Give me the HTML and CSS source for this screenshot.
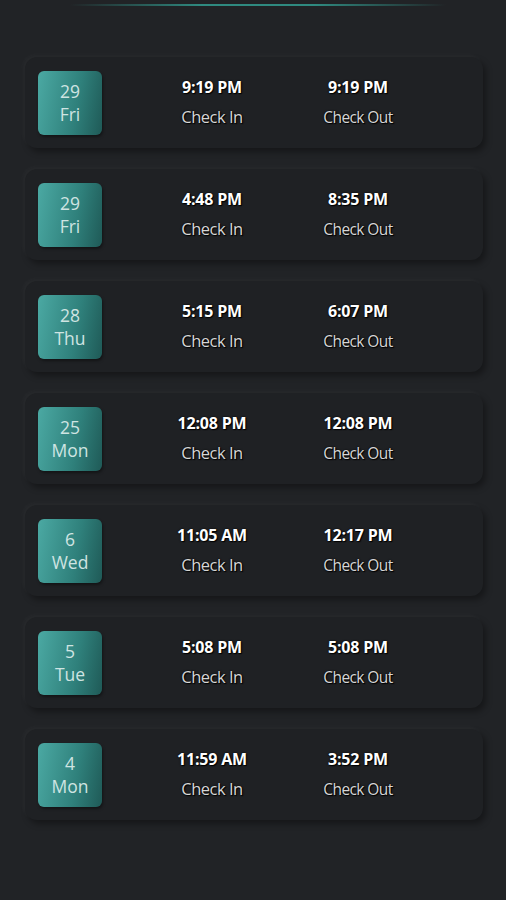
FILE: index.html
```html
<!DOCTYPE html>
<html lang="en">
<head>
    <meta charset="UTF-8">
    <meta name="viewport" content="width=device-width, initial-scale=1.0">
    <title>Attendance</title>
    <link rel="stylesheet" href="styles.css">
</head>
<body>

<div class="top-line"></div>

<div class="list">
    <div class="card">
        <div class="date"><span>29</span><span>Fri</span></div>
        <div class="col in"><div class="time">9:19 PM</div><div class="label">Check In</div></div>
        <div class="col"><div class="time">9:19 PM</div><div class="label out">Check Out</div></div>
    </div>
    <div class="card">
        <div class="date"><span>29</span><span>Fri</span></div>
        <div class="col in"><div class="time">4:48 PM</div><div class="label">Check In</div></div>
        <div class="col"><div class="time">8:35 PM</div><div class="label out">Check Out</div></div>
    </div>
    <div class="card">
        <div class="date"><span>28</span><span>Thu</span></div>
        <div class="col in"><div class="time">5:15 PM</div><div class="label">Check In</div></div>
        <div class="col"><div class="time">6:07 PM</div><div class="label out">Check Out</div></div>
    </div>
    <div class="card">
        <div class="date"><span>25</span><span>Mon</span></div>
        <div class="col in"><div class="time">12:08 PM</div><div class="label">Check In</div></div>
        <div class="col"><div class="time">12:08 PM</div><div class="label out">Check Out</div></div>
    </div>
    <div class="card">
        <div class="date"><span>6</span><span>Wed</span></div>
        <div class="col in"><div class="time">11:05 AM</div><div class="label">Check In</div></div>
        <div class="col"><div class="time">12:17 PM</div><div class="label out">Check Out</div></div>
    </div>
    <div class="card">
        <div class="date"><span>5</span><span>Tue</span></div>
        <div class="col in"><div class="time">5:08 PM</div><div class="label">Check In</div></div>
        <div class="col"><div class="time">5:08 PM</div><div class="label out">Check Out</div></div>
    </div>
    <div class="card">
        <div class="date"><span>4</span><span>Mon</span></div>
        <div class="col in"><div class="time">11:59 AM</div><div class="label">Check In</div></div>
        <div class="col"><div class="time">3:52 PM</div><div class="label out">Check Out</div></div>
    </div>
</div>

</body>
</html>
```

FILE: styles.css
```css
body {
    font-family: 'Open Sans', 'Noto Sans', sans-serif;
    margin: 0;
    padding: 0;
    background-color: #212326;
    color: #ffffff;
    height: 900px;
    overflow: hidden;
}
.top-line {
    height: 2px;
    margin: 4px 60px 0 70px;
    background: linear-gradient(90deg, rgba(47, 138, 128, 0), #2f8a80 35%, #2f8a80 65%, rgba(47, 138, 128, 0));
}
.list {
    display: flex;
    flex-direction: column;
    gap: 21px;
    padding: 51px 23px 0 25px;
}
.card {
    display: flex;
    align-items: center;
    height: 91px;
    padding: 0 13px;
    background-color: #1f2124;
    border-radius: 12px;
    box-shadow: -2px -2px 4px rgba(255, 255, 255, 0.035), 3px 4px 6px rgba(0, 0, 0, 0.35);
}
.date {
    width: 64px;
    height: 64px;
    border-radius: 6px;
    background: linear-gradient(100deg, #4ba9a3 0%, #2f807b 60%, #1f5a57 100%);
    display: flex;
    flex-direction: column;
    align-items: center;
    justify-content: center;
    font-size: 17.5px;
    line-height: 23px;
    color: #cfe4e2;
    font-weight: 400;
    box-shadow: 1px 2px 3px rgba(0, 0, 0, 0.4);
}
.col {
    width: 146px;
    text-align: center;
    display: flex;
    flex-direction: column;
    gap: 10px;
    margin-top: -1px;
}
.col.in {
    margin-left: 37px;
}
.time {
    font-size: 16px;
    font-weight: 700;
    line-height: 20px;
    letter-spacing: -0.2px;
    text-shadow: 0 0 2px #000, 1px 1px 1px #000;
}
.label {
    font-size: 16.5px;
    line-height: 20px;
    color: #d6d6d6;
    letter-spacing: -0.5px;
    text-shadow: 0 0 2px #000, 1px 1px 1px #000;
}
.label.out {
    font-size: 15.5px;
    letter-spacing: -0.6px;
}
```
